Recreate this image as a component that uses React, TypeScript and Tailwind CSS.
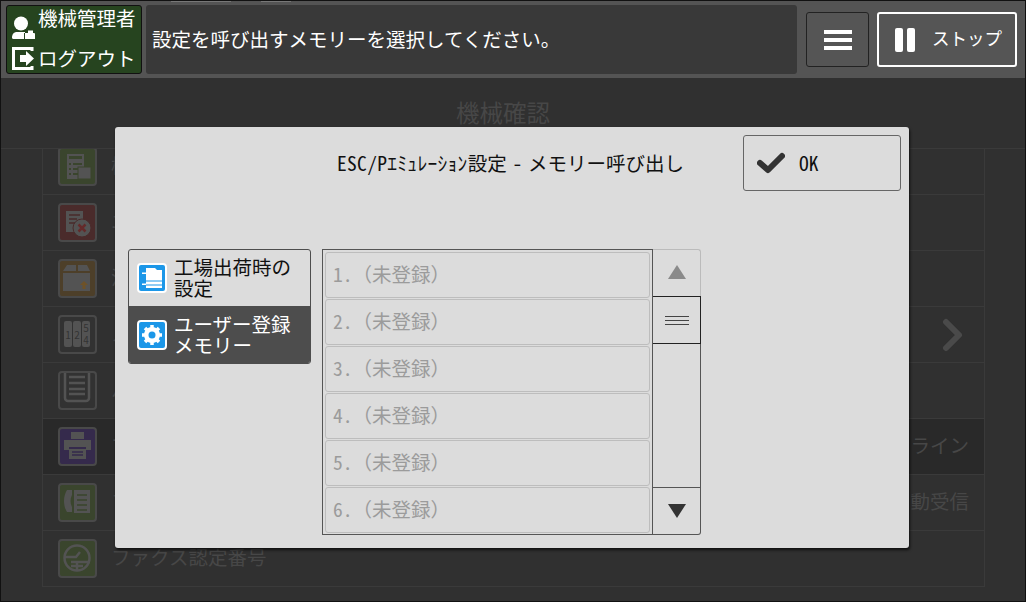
const jp = "font-['Noto_Sans_CJK_JP','Noto_Sans',sans-serif]";

const backdropRows = [
  { label: "機能リスト", color: "#3a452d", icon: "report" },
  { label: "エラー履歴", color: "#4a2b2b", icon: "error" },
  { label: "消耗品", color: "#4d3f29", icon: "box" },
  { label: "メーター確認", color: "#323232", icon: "meter" },
  { label: "ハードディスク", color: "#323232", icon: "list" },
  { label: "プリンター言語", color: "#352a4c", icon: "printer", right: "オンライン", active: true },
  { label: "ファクス受信", color: "#3a452d", icon: "fax", right: "自動受信" },
  { label: "ファクス認定番号", color: "#3a452d", icon: "cert" },
];

function RowIcon({ kind, bg }: { kind: string; bg: string }) {
  const c = "#535353";
  if (kind === "report")
    return (
      <g fill={c}>
        <rect x="9" y="7" width="17" height="25" />
        <rect x="11" y="9" width="13" height="3" fill={bg} />
        <path d="M11 16h2v2h-2zM15 16h9v2h-9zM11 21h2v2h-2zM15 21h5v2h-5zM11 26h2v2h-2zM15 26h5v2h-5z" fill={bg} />
        <rect x="20" y="20" width="13" height="12" stroke={bg} />
      </g>
    );
  if (kind === "error")
    return (
      <g>
        <rect x="8" y="8" width="17" height="21" fill={c} />
        <path d="M11 12h11M11 16h8M11 20h6" stroke={bg} strokeWidth="1.500" />
        <circle cx="24" cy="25" r="9" fill={c} stroke={bg} />
        <path d="M20.500 21.500 27.500 28.500M27.500 21.500 20.500 28.500" stroke="#642a2a" strokeWidth="2.500" />
      </g>
    );
  if (kind === "box")
    return (
      <g fill={c}>
        <path d="M9 6h9v6H5zM20 6h9l3 6H20zM5 14h27v18H5z" />
        <path d="M26 22l4 4h-2.500v4h-3v-4H22z" fill="#6e5228" />
      </g>
    );
  if (kind === "meter")
    return (
      <g>
        <rect x="6" y="6" width="8" height="26" rx="2" fill={c} />
        <rect x="15" y="6" width="8" height="26" rx="2" fill={c} />
        <rect x="24" y="6" width="8" height="26" rx="2" fill={c} />
        <g fontSize="10" fill="#333" textAnchor="middle">
          <text x="10" y="24">1</text>
          <text x="19" y="24">2</text>
          <text x="28" y="17">5</text>
          <text x="28" y="29">4</text>
        </g>
      </g>
    );
  if (kind === "list")
    return (
      <g fill="none" stroke={c} strokeWidth="2.500">
        <path d="M7 2v25a3 3 0 0 0 3 3h18a3 3 0 0 0 3-3V2" />
        <path d="M11 6h16M11 12h16M11 18h16M11 23h16" />
      </g>
    );
  if (kind === "printer")
    return (
      <g fill={c}>
        <rect x="13" y="5" width="13" height="7" />
        <path d="M6 13h27v10h-5v-3H11v3H6z" />
        <path d="M11 22h17v10H11z" />
        <path d="M14 25h11M14 28h11" stroke={bg} strokeWidth="1.500" />
      </g>
    );
  if (kind === "fax")
    return (
      <g fill={c}>
        <path d="M9 7h5v5c-2 4-2 8 0 12v5H9c-4-6-4-16 0-22z" />
        <rect x="16" y="7" width="16" height="23" />
        <path d="M19 12h10M19 17h10M19 22h10M19 27h10" stroke={bg} strokeWidth="1.500" />
      </g>
    );
  return (
    <g fill="none" stroke={c} strokeWidth="2.500">
      <circle cx="19" cy="19" r="12.500" />
      <path d="M7 18h11l4-5M13 23h19M19 23v9M13 27h12" />
    </g>
  );
}

function BackdropRow({ row, first }: { row: (typeof backdropRows)[number]; first: boolean }) {
  return (
    <div
      className={`flex h-[56px] shrink-0 items-center border-b border-[#3a3a3a] pl-[15px] pr-[15px] ${
        first ? "-mt-[10px]" : ""
      } ${row.active ? "bg-[#292929]" : ""}`}
    >
      <svg width="39" height="39" viewBox="0 0 39 39" className="shrink-0">
        <rect x="1" y="1" width="37" height="37" rx="3" fill={row.color} stroke="#494949" strokeWidth="2" />
        <RowIcon kind={row.icon} bg={row.color} />
      </svg>
      <span className="ml-[14px] pb-[3px] text-[19.5px] text-[#474747]">{row.label}</span>
      {row.right && <span className="ml-auto pb-[3px] text-[19.5px] text-[#474747]">{row.right}</span>}
    </div>
  );
}

function ListRow({ n }: { n: number }) {
  return (
    <div className="flex h-[46px] shrink-0 items-center rounded-[3px] border border-[#bdbdbd] pb-[2px] pl-[7px] text-[19.5px] text-[#9b9b9b]">
      <span className="[font-feature-settings:'hwid']">{n}.</span>（未登録）
    </div>
  );
}

export default function App() {
  return (
    <div className={`${jp} relative flex h-[602px] w-[1026px] flex-col overflow-hidden border border-[#111] bg-[#303030]`}>
      <span className="absolute left-[170px] top-0 h-px w-[60px] bg-[#777]" />
      <span className="absolute left-[260px] top-0 h-px w-[30px] bg-[#777]" />

      {/* header bar */}
      <div className="flex h-[77px] shrink-0 items-center bg-[#545454] pl-[5px] pr-[8px]">
        <div className="flex h-[69px] w-[136px] flex-col justify-between rounded-[3px] border border-[#111] bg-[#26441f] pb-[3px] text-[19.5px] leading-[24px] text-white">
          <div className="flex items-start pl-[5px]">
            <svg width="24" height="24" viewBox="0 0 24 24" className="mt-[10px] shrink-0" fill="#fff">
              <circle cx="9" cy="7.500" r="7" />
              <path d="M0 22c0-4 2-6 5-6h8v1h-1v6H1.500A1.500 1.500 0 0 1 0 22z" />
              <path d="M13 17h3v-2.500h5V17h1a1 1 0 0 1 1 1v5H13z" />
            </svg>
            <span className="ml-[2px] whitespace-nowrap">機械管理者</span>
          </div>
          <div className="flex items-center pl-[5px]">
            <svg width="23" height="23" viewBox="0 0 23 23" className="shrink-0" fill="none">
              <path d="M20 4V1.500H1.500v20H20V19" stroke="#fff" strokeWidth="3" />
              <path d="M8 8h6V4l8 7.500-8 7.500v-4H8z" fill="#fff" />
            </svg>
            <span className="ml-[3px] whitespace-nowrap">ログアウト</span>
          </div>
        </div>
        <div className="ml-[4px] flex h-[69px] w-[651px] items-center rounded-[3px] bg-[#393939] pb-[2px] pl-[6px] text-[19.5px] text-white">
          設定を呼び出すメモリーを選択してください。
        </div>
        <button className="ml-[9px] flex h-[55px] w-[63px] items-center justify-center rounded-[3px] border border-[#222] bg-[#555]">
          <span className="flex flex-col gap-[4px]">
            <span className="h-[4px] w-[28px] bg-white" />
            <span className="h-[4px] w-[28px] bg-white" />
            <span className="h-[4px] w-[28px] bg-white" />
          </span>
        </button>
        <button className="ml-[8px] flex h-[55px] w-[140px] items-center rounded-[3px] border-2 border-white bg-[#555] pl-[16px] text-[17.5px] text-white">
          <span className="flex gap-[4px]">
            <span className="h-[24px] w-[8px] rounded-[2px] bg-white" />
            <span className="h-[24px] w-[8px] rounded-[2px] bg-white" />
          </span>
          <span className="ml-[17px] pb-[3px]">ストップ</span>
        </button>
      </div>

      {/* dimmed screen behind the dialog */}
      <div className="flex h-[71px] shrink-0 items-center justify-center border-b border-[#3a3a3a] pr-[20px] text-[23.5px] font-normal text-[#474747]">
        機械確認
      </div>
      <div className="ml-[41px] flex w-[943px] flex-col overflow-hidden border-x border-[#3a3a3a]">
        {backdropRows.map((row, i) => (
          <BackdropRow key={row.label} row={row} first={i === 0} />
        ))}
      </div>

      <svg width="24" height="34" viewBox="0 0 24 34" className="absolute left-[940px] top-[317px]">
        <path d="M5 4 18 17 5 30" fill="none" stroke="#4a4a4a" strokeWidth="6" strokeLinecap="round" strokeLinejoin="round" />
      </svg>

      {/* dialog */}
      <div className="absolute left-[114px] top-[126px] flex h-[421px] w-[794px] flex-col rounded-[3px] bg-[#dcdcdc] pl-[13px] pr-[8px] pt-[8px] shadow-[1px_2px_3px_rgba(0,0,0,0.7)]">
        <div className="flex h-[56px] shrink-0 items-center">
          <div className="flex-1 whitespace-pre pl-[209px] text-[19.5px] text-[#111] [font-feature-settings:'hwid'] [word-spacing:-4px]">
            <span className="tracking-[0.3px]">ESC/Pｴﾐｭﾚｰｼｮﾝ</span>設定 - メモリー呼び出し
          </div>
          <button className="flex h-[56px] w-[158px] items-center rounded-[3px] border border-[#666] pl-[13px] text-[19.5px] text-[#111] [font-feature-settings:'hwid']">
            <svg width="28" height="24" viewBox="0 0 28 24" className="shrink-0">
              <path d="M3 12 11 19 25 5" fill="none" stroke="#333" strokeWidth="6" strokeLinejoin="round" strokeLinecap="round" />
            </svg>
            <span className="ml-[14px]">OK</span>
          </button>
        </div>

        <div className="mt-[58px] flex items-start">
          <div className="flex w-[183px] flex-col overflow-hidden rounded-[3px] border border-[#4d4d4d] text-[19.5px] leading-[21px]">
            <div className="flex h-[56px] items-center pl-[8px] text-[#111]">
              <svg width="30" height="30" viewBox="0 0 30 30" className="shrink-0">
                <rect x="1" y="1" width="28" height="28" rx="3" fill="#1c97e8" stroke="#fff" strokeWidth="2" />
                <path d="M9 5h9l2 2h5v18H9v-3H5v-1.500h4V11H5V9.500h4z" fill="#fff" />
                <path d="M9 18h16M9 22h16" stroke="#1c97e8" />
              </svg>
              <span className="ml-[7px] pb-[2px]">工場出荷時の<br />設定</span>
            </div>
            <div className="flex h-[57px] items-center bg-[#4d4d4d] pl-[8px] text-white">
              <svg width="30" height="30" viewBox="0 0 30 30" className="shrink-0">
                <rect x="1" y="1" width="28" height="28" rx="3" fill="#1c97e8" stroke="#fff" strokeWidth="2" />
                <circle cx="15" cy="15" r="8" fill="#fff" />
                <path d="M15 5v20M5 15h20M8 8l14 14M22 8 8 22" stroke="#fff" strokeWidth="3.500" />
                <circle cx="15" cy="15" r="3.500" fill="#1c97e8" />
              </svg>
              <span className="ml-[7px] pb-[2px]">ユーザー登録<br />メモリー</span>
            </div>
          </div>

          <div className="ml-[11px] flex h-[286px] w-[379px]">
            <div className="flex w-[331px] flex-col gap-[1px] border border-[#555] pl-[2px] pr-[2px] pt-[2px]">
              {[1, 2, 3, 4, 5, 6].map((n) => (
                <ListRow key={n} n={n} />
              ))}
            </div>
            <div className="flex w-[48px] flex-col">
              <div className="flex h-[47px] shrink-0 items-center justify-center rounded-tr-[3px] border-r border-t border-[#bbb] pb-[2px]">
                <span className="h-0 w-0 border-x-[9px] border-b-[14px] border-x-transparent border-b-[#8a8a8a]" />
              </div>
              <div className="flex h-[48px] shrink-0 flex-col items-center justify-center gap-[3px] border-y border-r border-[#222]">
                <span className="h-px w-[24px] bg-[#444]" />
                <span className="h-px w-[24px] bg-[#444]" />
                <span className="h-px w-[24px] bg-[#444]" />
              </div>
              <div className="flex-1 border-r border-[#555]" />
              <div className="flex h-[48px] shrink-0 items-center justify-center rounded-br-[3px] border-y border-r border-[#555]">
                <span className="h-0 w-0 border-x-[9px] border-t-[14px] border-x-transparent border-t-[#333]" />
              </div>
            </div>
          </div>
        </div>
      </div>
    </div>
  );
}
